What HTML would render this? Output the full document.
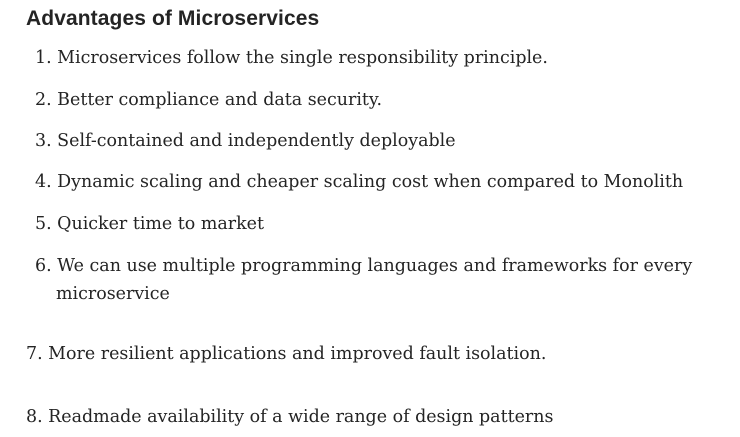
<!DOCTYPE html>
<html><head><meta charset="utf-8"><style>
html,body{margin:0;padding:0;background:#fff;width:740px;height:437px;overflow:hidden}
.h{position:absolute;left:26px;top:7px;font:bold 21px "Liberation Sans",sans-serif;color:#242424;letter-spacing:0.1px}
.l{position:absolute;font:17.45px "DejaVu Serif",serif;color:#242424;white-space:nowrap;line-height:28px}
</style></head><body>
<div class="h">Advantages of Microservices</div>
<div class="l" style="left:35px;top:44px">1. Microservices follow the single responsibility principle.</div>
<div class="l" style="left:35px;top:86px">2. Better compliance and data security.</div>
<div class="l" style="left:35px;top:127px">3. Self-contained and independently deployable</div>
<div class="l" style="left:35px;top:168px">4. Dynamic scaling and cheaper scaling cost when compared to Monolith</div>
<div class="l" style="left:35px;top:210px">5. Quicker time to market</div>
<div class="l" style="left:35px;top:252px">6. We can use multiple programming languages and frameworks for every</div>
<div class="l" style="left:56px;top:280px">microservice</div>
<div class="l" style="left:26px;top:340px">7. More resilient applications and improved fault isolation.</div>
<div class="l" style="left:26px;top:403px">8. Readmade availability of a wide range of design patterns</div>
</body></html>
